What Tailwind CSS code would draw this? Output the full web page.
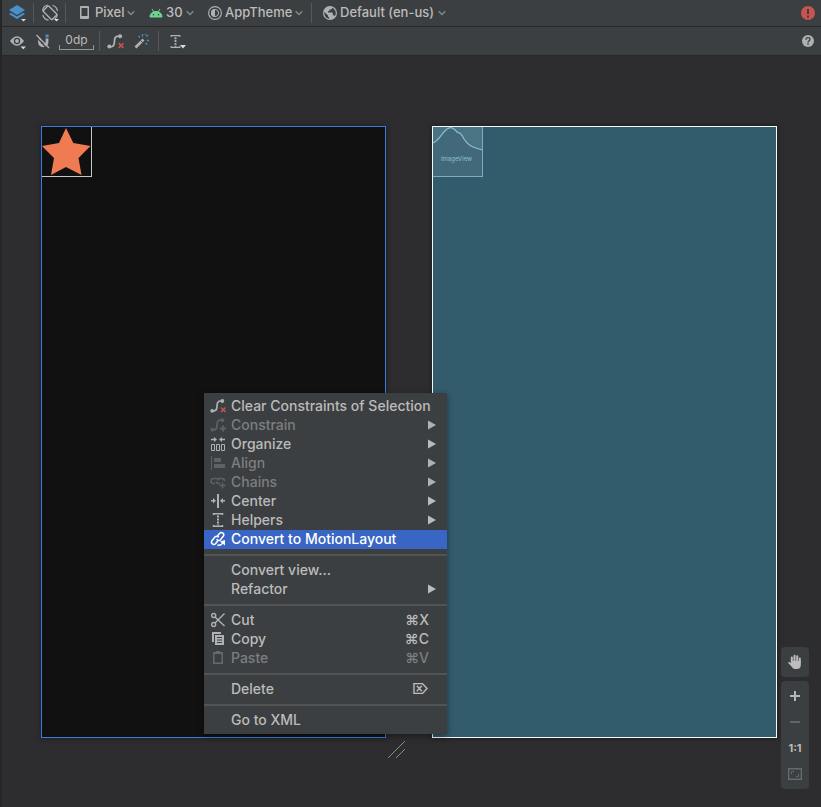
<!DOCTYPE html>
<html lang="en">
<head>
<meta charset="utf-8">
<meta name="viewport" content="width=device-width, initial-scale=1">
<title>Layout Editor</title>
<script src="https://cdn.jsdelivr.net/npm/@tailwindcss/browser@4"></script>
</head>
<body class="bg-[#2d2d2f] font-['Inter','DejaVu_Sans',sans-serif] text-[#bbbbbb]">
<svg class="hidden">
  <symbol id="chev" viewBox="0 0 8 8"><path d="M.7 2.200 4 5.500l3.300-3.300" fill="none" stroke="#7f8b91" stroke-width="1.400"/></symbol>
  <symbol id="arrow" viewBox="0 0 8 10"><path d="M0 .5v9L8 5z" fill="currentColor"/></symbol>
  <symbol id="clear" viewBox="0 0 16 16"><path d="M2 13h1.500C6.500 13 7 11 7 8s.5-5 3.500-5H12" fill="none" stroke="#afb1b3" stroke-width="1.700"/><circle cx="2.200" cy="12.800" r="1.900" fill="#afb1b3"/><circle cx="12.300" cy="3" r="1.900" fill="#afb1b3"/><path d="m11 9.500 4.500 4.500M15.500 9.500 11 14" stroke="#c75450" stroke-width="1.500"/></symbol>
  <symbol id="ibeam" viewBox="0 0 16 16"><path d="M3.500 3V1.700h9V3M3.500 13v1.300h9V13" fill="none" stroke="#afb1b3" stroke-width="1.500"/><path d="M8 3.500v10" stroke="#afb1b3" stroke-width="2" stroke-dasharray="2 1"/></symbol>
</svg>
<main class="relative min-h-screen border-l-2 border-[#252628] flex flex-col overflow-hidden">
  <header>
    <div class="h-[27px] bg-[#3c3f41] border-b border-[#282828] flex items-center pb-px pr-1.5 text-[13px] font-medium" role="toolbar" aria-label="Device configuration">
      <button aria-label="Design surface" class="ml-1.5 w-[20px] h-5"><svg width="20" height="20" viewBox="0 0 20 20"><path d="m9 2 8 5-8 5-8-5z" fill="#4a91c9"/><path d="m1 11 2-1.300 6 3.700 6-3.700 2 1.300-8 5z" fill="#4a91c9"/><path d="M13 16h5l-2.500 2.500z" fill="#dadada"/></svg></button>
      <span class="ml-[5px] w-px h-5 bg-[#555759]"></span>
      <button aria-label="Orientation" class="ml-[7px] w-5 h-5"><svg width="20" height="20" viewBox="0 0 20 20" fill="none" stroke="#afb1b3" stroke-width="1.400"><rect x="5.200" y="3.500" width="7.600" height="12.500" rx="1" transform="rotate(-45 9 9.700)"/><path d="M1.600 8C1.800 5 4 2.400 7 2M16.400 11.500c-.3 2-1.200 3.500-2.400 4.500M11.500 2.300c2.700.9 4.600 3 5 5.700M1.800 12c.7 2.700 3 4.700 5.700 5.200" stroke-width="1.200"/><path d="M13 16h5l-2.500 2.500z" fill="#dadada" stroke="none"/></svg></button>
      <span class="ml-1 w-px h-5 bg-[#555759]"></span>
      <button class="ml-3.5 flex items-center"><svg width="9" height="13" viewBox="0 0 9 13"><path fill="#afb1b3" fill-rule="evenodd" d="M1 0h7q1 0 1 1v11q0 1-1 1H1q-1 0-1-1V1q0-1 1-1zm.5 2v8h6V2z"/></svg><span class="ml-1.5 w-8 text-left">Pixel</span><svg width="8" height="8"><use href="#chev"/></svg></button>
      <button class="ml-3.5 flex items-center"><svg width="14" height="14" viewBox="0 0 14 14"><path d="M1 11c0-3 2-5.500 6-5.500s6 2.500 6 5.500zM3 3l2 3.200M11 3 9 6.200" fill="#6dd58c" stroke="#6dd58c"/><circle cx="4.500" cy="8.700" r=".8" fill="#3c3f41"/><circle cx="9.500" cy="8.700" r=".8" fill="#3c3f41"/></svg><span class="ml-[3px] w-5 text-left">30</span><svg width="8" height="8"><use href="#chev"/></svg></button>
      <button class="ml-3.5 flex items-center"><svg width="14" height="14" viewBox="0 0 14 14"><circle cx="7" cy="7" r="6.400" fill="none" stroke="#afb1b3" stroke-width="1.100"/><circle cx="7" cy="7" r="3.600" fill="none" stroke="#afb1b3" stroke-width="1"/><path d="M7 3a4 4 0 0 0 0 8z" fill="#afb1b3"/></svg><span class="ml-[3px] w-[70px] text-left whitespace-nowrap">AppTheme</span><svg width="8" height="8"><use href="#chev"/></svg></button>
      <span class="ml-2 w-px h-5 bg-[#555759]"></span>
      <button class="ml-[11px] flex items-center"><svg width="14" height="14" viewBox="0 0 14 14"><circle cx="7" cy="7" r="7" fill="#afb1b3"/><path d="M1.300 5.800 5 9.500v1l1.200 1v1.300C3 12.500 1 9.500 1.300 5.800zM9 1.700v.8q0 1-1.200 1H6.400V5H5v1.400h4q.8 0 .8.800v2h.8q1 0 1.200 1C14 7 12.500 3 9 1.700z" fill="#3c3f41"/></svg><span class="ml-[3px] w-[98px] text-left whitespace-nowrap">Default (en-us)</span><svg width="8" height="8"><use href="#chev"/></svg></button>
      <button aria-label="Errors" class="ml-auto"><svg width="14" height="14" viewBox="0 0 14 14"><circle cx="7" cy="7" r="7" fill="#c75450"/><path d="M6 3h2v5H6zM6 9.500h2v2H6z" fill="#3c3f41"/></svg></button>
    </div>
    <div class="h-[29px] bg-[#3c3f41] border-b border-[#282828] flex items-center pr-[7px] text-xs" role="toolbar" aria-label="Constraint tools">
      <button aria-label="View options" class="ml-1.5 w-5 h-5"><svg width="20" height="20" viewBox="0 0 20 20"><path d="M2 10q7-9.500 14 0-7 9.500-14 0z" fill="#afb1b3"/><circle cx="9" cy="10" r="3.200" fill="#3c3f41"/><circle cx="9" cy="10" r="1.900" fill="#afb1b3"/><path d="M12.500 15.500h5.500l-2.700 2.800z" fill="#dadada"/></svg></button>
      <button aria-label="Autoconnect" class="ml-[7px] w-4 h-5"><svg width="16" height="20" viewBox="0 0 16 20"><path d="M4.500 7v4.500c0 4.300 7.500 4.300 7.500 0V7.500" fill="none" stroke="#afb1b3" stroke-width="2.800"/><path d="M10.600 3.500h3v3h-3z" fill="#4a91c9"/><path d="m1 5.500 12 13" stroke="#3c3f41" stroke-width="1.200"/><path d="m1.500 4 12.500 13" stroke="#afb1b3" stroke-width="1.300"/></svg></button>
      <button aria-label="Default margin 0dp" class="ml-2 w-[35px] h-[17px] border-b border-[#929496] flex justify-center leading-[14px] relative before:absolute before:left-0 before:bottom-0 before:h-1 before:w-px before:bg-[#929496] after:absolute after:right-0 after:bottom-0 after:h-1 after:w-px after:bg-[#929496]">0dp</button>
      <span class="ml-[5px] w-px h-5 bg-[#555759]"></span>
      <button aria-label="Clear all constraints" class="ml-[7px]"><svg width="17" height="17"><use href="#clear"/></svg></button>
      <button aria-label="Infer constraints" class="ml-2.5"><svg width="16" height="16" viewBox="0 0 16 16"><path d="m1.500 14.500 8-8" stroke="#afb1b3" stroke-width="2.600"/><path d="m6.500 7.500 2 2" stroke="#3c3f41" stroke-width="1"/><path d="M8.500 1v2.500M4.500 3 6 4.500M12.500 3.500 14 2M13 7.500h2M11.500 10l1.500 1.500M11.500 1v1" stroke="#4a91c9" stroke-width="1.300"/></svg></button>
      <span class="ml-2 w-px h-5 bg-[#555759]"></span>
      <button aria-label="Guidelines" class="ml-2 relative"><svg width="17" height="15"><use href="#ibeam"/></svg><svg class="absolute -right-0.5 bottom-0" width="6" height="4" viewBox="0 0 6 4"><path d="M0 0h6L3 3.500z" fill="#dadada"/></svg></button>
      <button aria-label="Help" class="ml-auto"><svg width="12" height="12" viewBox="0 0 12 12"><circle cx="6" cy="6" r="6" fill="#afb1b3"/><path d="M4 4.700C4 2 8 2 8 4.500 8 6 6 5.800 6 7.500" fill="none" stroke="#3c3f41" stroke-width="1.300"/><path d="M5.300 8.300h1.400v1.400H5.300z" fill="#3c3f41"/></svg></button>
    </div>
  </header>

  <section class="flex gap-[46px] pl-[39px] pr-11 pt-[70px]" aria-label="Canvas">
    <div class="flex-1 aspect-[345/612] bg-[#111111] border border-[#3a7be0] shadow-[0_0_5px_#1a1a1a]">
      <div class="w-[50px] h-[50px] border-r border-b border-[#c4c8c4]">
        <svg width="49" height="49" viewBox="0 0 49 49"><path d="m24 1 7.300 15L48.500 19 36.500 31l3 17L24 40 9 48l3-17L0 19l17-3z" fill="#f07b52"/></svg>
      </div>
    </div>
    <div class="flex-1 aspect-[345/612] bg-[#325b6c] border border-[#f4f8fa] shadow-[0_0_5px_#1a1a1a]">
      <div class="w-[50px] h-[50px] border-r border-b border-[#79aec0] bg-[#42697a] relative">
        <svg width="49" height="49" viewBox="0 0 49 49"><path d="M0 16c5-2 7-6 10-10C16-1 19-1 24 5c3 2 3-1 7 7 5 8 10 8 18 11V0H0z" fill="#4a7484"/><path d="M0 16c5-2 7-6 10-10C16-1 19-1 24 5c3 2 3-1 7 7 5 8 10 8 18 11" fill="none" stroke="#8ac0d1" stroke-width="1.200"/></svg>
        <span class="absolute left-0 w-[47px] top-[28px] text-center text-[6px] leading-[8px] text-[#8ac0d1]">ImageView</span>
      </div>
    </div>
  </section>
  <svg class="absolute left-[385px] top-[740px]" width="20" height="20" viewBox="0 0 20 20" stroke="#8a8a8c" stroke-width="1"><path d="M1 18 18 1M9 18l9-9"/></svg>

  <div class="absolute right-3 bottom-[18px] w-7 flex flex-col gap-1" aria-label="Zoom controls">
    <button aria-label="Pan" class="h-[30px] rounded bg-[#3c3f41] flex items-center justify-center"><svg width="16" height="16" viewBox="0 0 16 16"><path d="M4.800 8V3.500M7.500 7V1.800M10.200 7V2.300M12.800 8V4.500" stroke="#bdbdbd" stroke-width="2" stroke-linecap="round"/><path d="M4 7h9.800v4.500Q13.500 15 9.500 15H8q-2 0-3.500-2.500L1 8.800Q2 7 4 9.300z" fill="#bdbdbd"/></svg></button>
    <div class="h-[108px] rounded bg-[#3c3f41] flex flex-col items-center py-0.5">
      <button aria-label="Zoom in" class="h-[26px]"><svg width="10" height="10" viewBox="0 0 10 10"><path d="M5 0v10M0 5h10" stroke="#b4b6b8" stroke-width="2"/></svg></button>
      <button aria-label="Zoom out" class="h-[26px]"><svg width="10" height="10" viewBox="0 0 10 10"><path d="M0 5h10" stroke="#626567" stroke-width="2"/></svg></button>
      <button class="h-[26px] text-[11px] font-bold">1:1</button>
      <button aria-label="Zoom to fit" class="h-[26px]"><svg width="14" height="12" viewBox="0 0 14 12" fill="none" stroke="#66686a"><path d="M.7.7h12.600v10.600H.7z" stroke-width="1.400"/><path d="M3.500 6V3.500H6M10.500 6v2.500H8"/></svg></button>
    </div>
  </div>

  <div role="menu" aria-label="Context menu" class="absolute left-[202px] top-[393px] w-[243px] py-1 bg-[#3c3f41] shadow-[0_2px_6px_rgba(0,0,0,0.4)] text-[14px] font-medium leading-[19px] *:[button]:flex *:[button]:w-full *:[button]:h-[19px] *:[button]:items-center *:[button]:pb-0.5 *:[button]:pl-1.5 *:[button]:pr-[11px] *:[button]:whitespace-nowrap">
    <button role="menuitem"><svg class="mr-[5px]" width="16" height="16"><use href="#clear"/></svg>Clear Constraints of Selection</button>
    <button role="menuitem" aria-disabled="true" class="text-[#7c7e80]"><svg class="mr-[5px]" width="16" height="16" viewBox="0 0 16 16" fill="#5f6264" stroke="#5f6264"><path d="M2 13h1.500C6.500 13 7 11 7 8s.5-5 3.500-5H12" fill="none" stroke-width="1.700"/><circle cx="2.300" cy="12.700" r="1.400"/><circle cx="12.300" cy="3.200" r="1.400"/><path d="M13 8.500v6M10 11.500h6" stroke-width="1.800"/></svg>Constrain<svg class="ml-auto text-[#afb1b3]" width="8" height="10"><use href="#arrow"/></svg></button>
    <button role="menuitem"><svg class="mr-[5px]" width="16" height="16" viewBox="0 0 16 16" fill="none" stroke="#afb1b3"><path d="M1.500 8.500h3v6h-3zM6.500 8.500h3v6h-3zM11.500 8.500h3v6h-3z"/><path d="M1 3.500h4M11 3.500h4" stroke-width="1.300"/><path d="M4 1v5l3-2.500zM12 1v5L9 3.500z" fill="#afb1b3" stroke="none"/></svg>Organize<svg class="ml-auto" width="8" height="10"><use href="#arrow"/></svg></button>
    <button role="menuitem" aria-disabled="true" class="text-[#7c7e80]"><svg class="mr-[5px]" width="16" height="16" viewBox="0 0 16 16" fill="#5f6264"><path d="M1 1h1v14H1zM4 3h7v4H4zM4 9h11v4H4z"/></svg>Align<svg class="ml-auto text-[#afb1b3]" width="8" height="10"><use href="#arrow"/></svg></button>
    <button role="menuitem" aria-disabled="true" class="text-[#7c7e80]"><svg class="mr-[5px]" width="16" height="16" viewBox="0 0 16 16" fill="none" stroke="#5f6264" stroke-width="1.500"><path d="M5 9.500H3.500a2.500 2.500 0 0 1 0-5H6q2 0 2.500 2M8 4.500h4q2.500 0 2.500 2.500M10 9.500H8.500Q6.500 9.500 6 7.500M12.500 8.500v6M9.500 11.500h6"/></svg>Chains<svg class="ml-auto text-[#afb1b3]" width="8" height="10"><use href="#arrow"/></svg></button>
    <button role="menuitem"><svg class="mr-[5px]" width="16" height="16" viewBox="0 0 16 16" fill="#afb1b3"><path d="M7 1h2v14H7zM1 7h2V5l3 2.700-3 2.700v-2H1zM15 7h-2V5l-3 2.700 3 2.700v-2h2z"/></svg>Center<svg class="ml-auto" width="8" height="10"><use href="#arrow"/></svg></button>
    <button role="menuitem"><svg class="mr-[5px]" width="16" height="16"><use href="#ibeam"/></svg>Helpers<svg class="ml-auto" width="8" height="10"><use href="#arrow"/></svg></button>
    <button role="menuitem" class="bg-[#3966c4] text-white"><svg class="mr-[5px]" width="16" height="16" viewBox="0 0 16 16" fill="none" stroke="#fff" stroke-width="1.500"><path d="M6.500 6 9.500 2.500c2.300-2.300 5.500.3 3.700 2.700L10.500 8.700C9.200 10.200 7.300 9.500 6.800 8M8.800 6.200C7.700 5 5.500 5 4.300 6.700L2 9.700c-1.700 2.500 1.500 5 3.500 3L8 9.500"/><path d="M7.500 14c2.500.6 4.500-.5 5.500-2.500"/><path d="m10 10.500 5-1.500v5.500z" fill="#fff" stroke="none"/></svg>Convert to MotionLayout</button>
    <div role="separator" class="my-[5px] h-0.5 bg-[#515355]"></div>
    <button role="menuitem"><span class="ml-[21px]">Convert view...</span></button>
    <button role="menuitem"><span class="ml-[21px]">Refactor</span><svg class="ml-auto" width="8" height="10"><use href="#arrow"/></svg></button>
    <div role="separator" class="my-[5px] h-0.5 bg-[#515355]"></div>
    <button role="menuitem"><svg class="mr-[5px]" width="16" height="16" viewBox="0 0 16 16" fill="none" stroke="#afb1b3" stroke-width="1.400"><circle cx="3.700" cy="3.500" r="2"/><circle cx="3.700" cy="12.500" r="2"/><path d="m5 5 9.500 9M5 11l9.500-9.500"/></svg>Cut<span class="ml-auto pr-[7px]">⌘X</span></button>
    <button role="menuitem"><svg class="mr-[5px]" width="16" height="16" viewBox="0 0 16 16" fill="#afb1b3"><path d="M2 1h9v2H4v8H2z"/><path fill-rule="evenodd" d="M5 4h9v10H5zm2 2v1h5V6zm0 2.500v1h5v-1zM7 11v1h5v-1z"/></svg>Copy<span class="ml-auto pr-[7px]">⌘C</span></button>
    <button role="menuitem" aria-disabled="true" class="text-[#7c7e80]"><svg class="mr-[5px]" width="16" height="16" viewBox="0 0 16 16"><path fill="#66696b" fill-rule="evenodd" d="M3 2h3V1h4v1h3v12H3zm1.500 2v8.500h7V4z"/></svg>Paste<span class="ml-auto pr-[7px]">⌘V</span></button>
    <div role="separator" class="my-[5px] h-0.5 bg-[#515355]"></div>
    <button role="menuitem"><span class="ml-[21px]">Delete</span><span class="ml-auto pr-[7px]">⌦</span></button>
    <div role="separator" class="my-[5px] h-0.5 bg-[#515355]"></div>
    <button role="menuitem"><span class="ml-[21px]">Go to XML</span></button>
  </div>
</main>
</body>
</html>
